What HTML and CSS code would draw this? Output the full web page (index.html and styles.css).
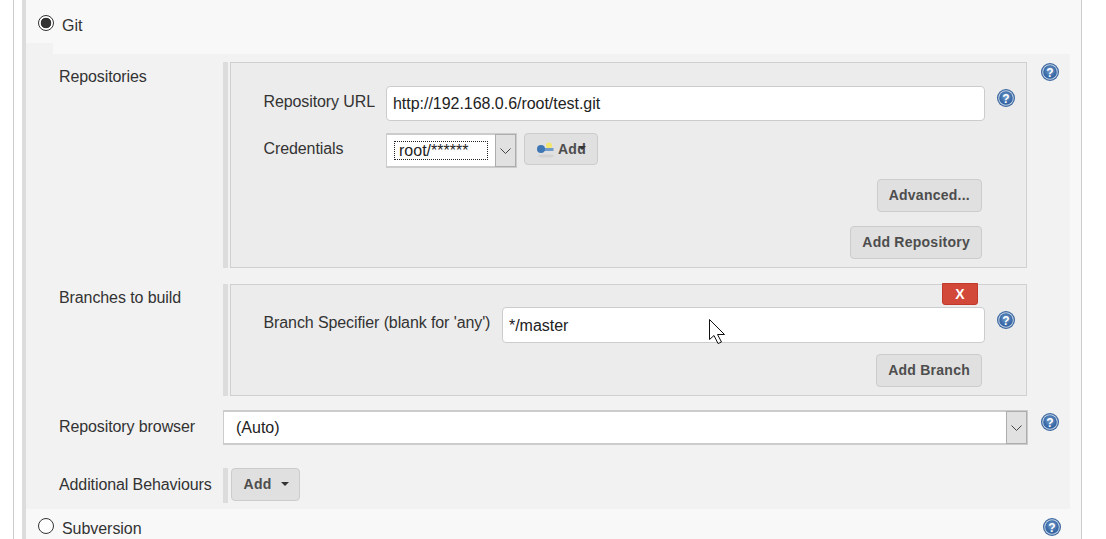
FILE: index.html
```html
<!DOCTYPE html>
<html lang="en">
<head>
<meta charset="utf-8">
<title>Source Code Management</title>
<link rel="stylesheet" href="styles.css">
</head>
<body>
<svg class="defs" width="0" height="0" aria-hidden="true">
  <defs>
    <radialGradient id="helpFill" cx="50%" cy="40%" r="65%">
      <stop offset="0" stop-color="#7fa3cf"/>
      <stop offset="0.6" stop-color="#3f6fab"/>
      <stop offset="1" stop-color="#2a5a9a"/>
    </radialGradient>
    <symbol id="help" viewBox="0 0 18 18">
      <circle cx="9" cy="9" r="9" fill="#3a669f"/>
      <circle cx="9" cy="9" r="7.8" fill="#c3d3e6"/>
      <circle cx="9" cy="9" r="6.8" fill="url(#helpFill)"/>
      <text x="9" y="14" text-anchor="middle" class="help-mark">?</text>
    </symbol>
  </defs>
</svg>
<div class="frame">
  <div class="chunk">
    <div class="radio-row radio-row-top">
      <span class="radio radio-on"></span>
      <span class="radio-label">Git</span>
    </div>
    <div class="notch"></div>
    <div class="panel">
      <div class="form-label label-repos">Repositories</div>
      <div class="bar-group">
        <div class="bar"></div>
        <div class="box box-repo">
          <div class="fields fields-repo">
            <label class="field-label">Repository URL</label>
            <input class="text-input" type="text" value="http://192.168.0.6/root/test.git">
            <svg class="help"><use href="#help"/></svg>
            <label class="field-label">Credentials</label>
            <div class="cred-row">
              <div class="select select-cred">
                <span class="select-value"><span class="focus-text">root/******</span></span>
                <span class="select-arrow"><svg width="11" height="6" viewBox="0 0 11 6"><path d="M.5.5l5 5 5-5" fill="none" stroke="#444"/></svg></span>
              </div>
              <button class="btn btn-key" type="button">
                <svg class="key" width="18" height="16" viewBox="0 0 18 16">
                  <ellipse cx="9" cy="14" rx="8" ry="1.6" fill="#d2d2d2"/>
                  <circle cx="12" cy="3.5" r="3" fill="#f4e66c"/>
                  <rect x="5" y="6" width="11.5" height="3" fill="#6f9ac9"/>
                  <circle cx="4" cy="7" r="4" fill="#3f76b4"/>
                </svg>
                <span class="btn-key-text">Add</span>
                <span class="caret caret-key"></span>
              </button>
            </div>
            <span></span>
          </div>
          <div class="btn-line btn-line-adv"><button class="btn" type="button">Advanced...</button></div>
          <div class="btn-line btn-line-add"><button class="btn" type="button">Add Repository</button></div>
        </div>
      </div>
      <svg class="help help-top"><use href="#help"/></svg>

      <div class="form-label label-branch">Branches to build</div>
      <div class="bar-group">
        <div class="bar"></div>
        <div class="box box-branch">
          <button class="btn-delete" type="button">X</button>
          <div class="fields fields-branch">
            <label class="field-label">Branch Specifier (blank for 'any')</label>
            <input class="text-input text-input-tall" type="text" value="*/master">
            <svg class="help"><use href="#help"/></svg>
          </div>
          <div class="btn-line btn-line-branch"><button class="btn" type="button">Add Branch</button></div>
        </div>
      </div>
      <span></span>

      <div class="form-label label-browser">Repository browser</div>
      <div class="select select-browser">
        <span class="select-value select-value-wide">(Auto)</span>
        <span class="select-arrow"><svg width="11" height="6" viewBox="0 0 11 6"><path d="M.5.5l5 5 5-5" fill="none" stroke="#444"/></svg></span>
      </div>
      <svg class="help help-top help-browser"><use href="#help"/></svg>

      <div class="form-label label-behaviours">Additional Behaviours</div>
      <div class="bar-group">
        <div class="bar"></div>
        <button class="btn btn-menu" type="button">Add<span class="caret"></span></button>
      </div>
      <span></span>
    </div>
    <div class="radio-row radio-row-bottom">
      <span class="radio"></span>
      <span class="radio-label">Subversion</span>
      <svg class="help help-svn"><use href="#help"/></svg>
    </div>
  </div>
</div>
<svg class="pointer" width="17" height="26" viewBox="0 0 17 26">
  <path d="M.5.5V20.5L5 16.5 9 24.5 12.5 23 8.5 15.5H15.5Z" fill="#fff" stroke="#111" stroke-width="1"/>
</svg>
</body>
</html>
```
FILE: styles.css
```css
* { box-sizing: border-box; }
html, body { margin: 0; height: 539px; overflow: hidden; background: #fff; }
body {
  position: relative;
  font-family: "Liberation Sans", Arial, sans-serif;
  font-size: 16px;
  color: #333;
}
.defs { position: absolute; }
.frame {
  margin-left: 13px;
  width: 1069px;
  height: 539px;
  padding-left: 8px;
  border-left: 1px solid #ccc;
  border-right: 1px solid #ccc;
}
.chunk {
  height: 539px;
  background: #f8f8f8;
  border-left: 4px solid #dcdcdc;
  overflow: hidden;
}
.radio-row { display: flex; align-items: center; padding-left: 12px; }
.radio-row-top { height: 43px; padding-top: 3px; }
.radio-row-bottom { height: 30px; padding-top: 7px; }
.radio {
  width: 16px;
  height: 16px;
  margin-top: -3px;
  border: 1px solid #333;
  border-radius: 50%;
  background: #fff;
  flex: none;
}
.radio-on {
  margin-top: 0;
  background: radial-gradient(circle, #333 0, #333 5px, #fff 5.6px);
}
.radio-label { margin-left: 8px; margin-top: 2px; letter-spacing: -0.05px; }
.radio-row-top .radio-label { margin-top: 6px; }
.notch { width: 27px; height: 11px; background: #f2f2f2; }
.panel {
  width: 1044px;
  height: 455px;
  padding-top: 8px;
  background: #f2f2f2;
  display: grid;
  grid-template-columns: 197px 805px 42px;
  grid-template-rows: 206px 112px 35px 35px;
  row-gap: 16px;
}
.panel > :nth-child(n+7) { margin-top: -2px; }
.panel > :nth-child(n+10) { margin-top: 5px; }
.panel > .help-browser { margin-top: 1px; }
.form-label { padding-left: 33px; line-height: 18px; letter-spacing: -0.1px; }
.label-repos { padding-top: 6px; }
.label-branch { padding-top: 5px; }
.label-browser { padding-top: 8px; }
.label-behaviours { padding-top: 8px; white-space: nowrap; }
.bar-group { display: flex; gap: 2px; height: 100%; }
.bar { width: 5px; background: #dcdcdc; flex: none; }
.box {
  position: relative;
  width: 797px;
  background: #ececec;
  border: 1px solid #d0d0d0;
}
.box-repo { padding-top: 23px; }
.box-branch { padding-top: 22px; }
.fields {
  display: grid;
  padding-left: 33px;
  row-gap: 12px;
  align-items: start;
}
.fields-repo { grid-template-columns: 122px 599px 1fr; grid-template-rows: 35px 35px; }
.fields-branch { grid-template-columns: 238px 483px 1fr; }
.field-label {
  margin-left: -0.5px;
  padding-top: 7px;
  line-height: 18px;
  white-space: nowrap;
  letter-spacing: -0.1px;
}
.text-input {
  width: 100%;
  height: 35px;
  padding: 0 6px;
  border: 1px solid #ccc;
  border-radius: 4px;
  background: #fff;
  font: 16px "Liberation Sans", Arial, sans-serif;
  letter-spacing: -0.03px;
  color: #222;
  outline: none;
}
.text-input-tall { height: 36px; padding-top: 2px; }
.help { width: 18px; height: 18px; display: block; }
.fields .help { margin: 3px 0 0 12px; }
.fields-branch .help { margin-top: 4px; }
.help-top { margin: 1px 0 0 13px; }
.help-mark { font: bold 12px "Liberation Sans", Arial, sans-serif; fill: #fff; }
.cred-row { display: flex; gap: 7px; align-items: flex-start; }
.select {
  display: flex;
  height: 35px;
  background: #fff;
  border: 2px solid #ccc;
  border-left-width: 1px;
  color: #222;
}
.select-cred { width: 131px; }
.select-browser { width: 805px; }
.select-value { flex: 1; padding: 6px 0 0 7px; }
.select-value-wide { padding: 7px 0 0 12px; }
.focus-text {
  display: inline-block;
  width: 94px;
  height: 19px;
  padding: 0 0 0 5px;
  line-height: 19px;
  outline: 1px dotted #222;
  outline-offset: -1px;
}
.select-arrow {
  width: 21px;
  margin: -1px -1px -1px 0;
  flex: none;
  display: flex;
  align-items: center;
  justify-content: center;
  background: #e1e1e1;
  border: 1px solid #adadad;
}
.btn {
  height: 33px;
  padding: 0 11px 2px;
  background: #e0e0e0;
  border: 1px solid #ccc;
  border-radius: 4px;
  font: bold 14px "Liberation Sans", Arial, sans-serif;
  letter-spacing: 0.25px;
  color: #4d4d4d;
}
.btn-key {
  position: relative;
  width: 74px;
  height: 32px;
  padding: 0 0 1px 33px;
  text-align: left;
}
.key { position: absolute; left: 12px; top: 8px; }
.btn-key-text { display: block; }
.caret {
  display: inline-block;
  width: 0;
  height: 0;
  margin-left: 10px;
  vertical-align: 3px;
  border-style: solid;
  border-width: 4px 4px 0;
  border-color: #333 transparent transparent;
}
.caret-key { position: absolute; left: 53px; top: 12px; margin: 0; }
.btn-menu { width: 69px; padding: 0 0 2px 2px; margin-left: 1px; }
.btn-line { display: flex; justify-content: flex-end; padding-right: 44px; }
.btn-line-adv { margin-top: 11px; }
.btn-line-add { margin-top: 14px; }
.btn-line-branch { margin-top: 11px; }
.btn-delete {
  position: absolute;
  top: -2px;
  right: 48px;
  width: 36px;
  height: 22px;
  padding: 0;
  background: #d24939;
  border: 1px solid #c0392b;
  border-radius: 0 0 3px 3px;
  font: bold 14px "Liberation Sans", Arial, sans-serif;
  color: #fff;
}
.help-svn { margin-left: auto; margin-right: 20px; margin-top: -2px; }
.pointer { position: absolute; left: 709px; top: 319px; }
```
